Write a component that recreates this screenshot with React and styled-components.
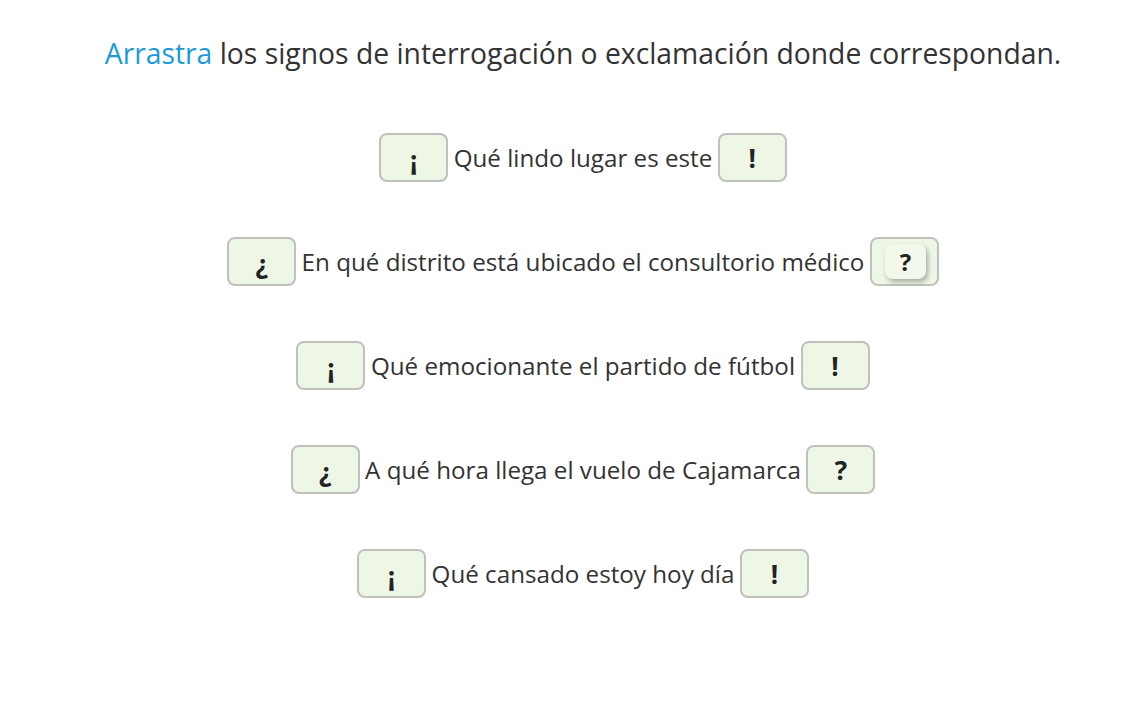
import React from 'react'
import styled, { createGlobalStyle } from 'styled-components'

const GlobalStyle = createGlobalStyle`
    body {
        margin: 0;
        background: #fff;
        font-family: "Open Sans", "Noto Sans", sans-serif;
        color: #333;
    }
`

const Page = styled.div`
    width: 1131px;
    height: 702px;
    box-sizing: border-box;
    padding: 32px 0 0 35px;
    display: flex;
    flex-direction: column;
    align-items: center;
`
const Title = styled.h1`
    margin: 0;
    font-size: 28.3px;
    font-weight: 400;
    line-height: 42px;
    color: #333;
`
const Blue = styled.span`
    color: #1b9ad8;
`
const List = styled.div`
    margin-top: 59px;
    display: flex;
    flex-direction: column;
    align-items: center;
    gap: 55px;
`
const Row = styled.div`
    display: flex;
    align-items: center;
    gap: 5.5px;
    height: 49px;
`
const Sentence = styled.span`
    font-size: 24.2px;
    color: #333;
    white-space: nowrap;
`
const Slot = styled.div`
    width: 69px;
    height: 49px;
    box-sizing: border-box;
    border: 2.5px solid #c0c0be;
    border-radius: 8px;
    background: #eef6e5;
    display: flex;
    align-items: center;
    justify-content: center;
    font-size: 26px;
    font-weight: 700;
    line-height: 1;
    color: #222;
    padding-top: ${p => (p.$low ? '5px' : '0')};
`
const Piece = styled.div`
    width: 41px;
    height: 35px;
    border-radius: 8px;
    background: #f3f8ec;
    box-shadow: 2px 3px 5px rgba(0, 0, 0, 0.3);
    display: flex;
    align-items: center;
    justify-content: center;
    font-size: 24px;
    font-weight: 700;
    color: #222;
    margin-left: 2px;
`

const rows = [
    { open: '¡', text: 'Qué lindo lugar es este', close: '!' },
    { open: '¿', text: 'En qué distrito está ubicado el consultorio médico', close: '?', placed: true },
    { open: '¡', text: 'Qué emocionante el partido de fútbol', close: '!' },
    { open: '¿', text: 'A qué hora llega el vuelo de Cajamarca', close: '?' },
    { open: '¡', text: 'Qué cansado estoy hoy día', close: '!' },
]

const App = () => {
    return (
        <Page>
            <GlobalStyle />
            <Title><Blue>Arrastra</Blue> los signos de interrogación o exclamación donde correspondan.</Title>
            <List>
                {rows.map((r, i) => (
                    <Row key={i}>
                        <Slot $low>{r.open}</Slot>
                        <Sentence>{r.text}</Sentence>
                        {r.placed
                            ? <Slot><Piece>{r.close}</Piece></Slot>
                            : <Slot>{r.close}</Slot>}
                    </Row>
                ))}
            </List>
        </Page>
    )
}

export default App
